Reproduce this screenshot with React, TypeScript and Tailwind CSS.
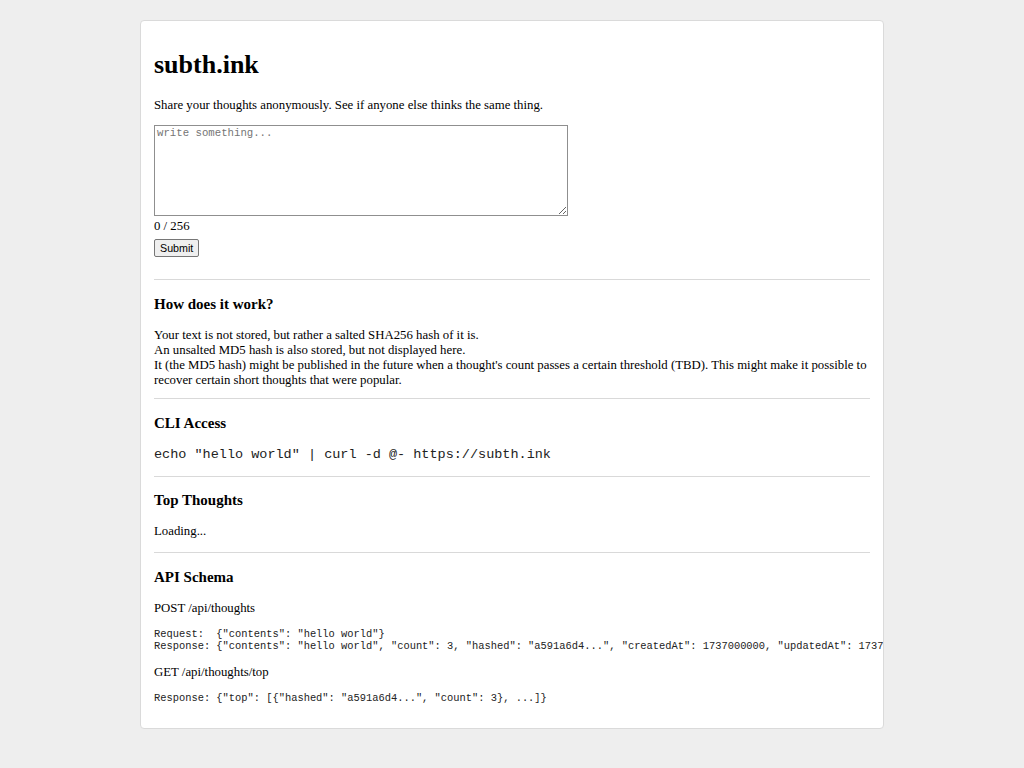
const serif = "font-['Liberation_Serif','Times_New_Roman',serif]";
const mono = "font-['Liberation_Mono','Courier_New',monospace]";

const Divider = () => <hr className="border-0 border-t border-[#d9d9d9]" />;

const Heading = ({ children, className = "" }: { children: React.ReactNode; className?: string }) => (
    <h3 className={`text-[15px] leading-[17px] font-bold ${className}`}>{children}</h3>
);

const App = () => {
    return (
        <div className={`min-h-[768px] bg-[#eeeeee] pt-[20px] pb-[40px] ${serif} text-black`}>
            <div className="mx-auto w-[744px] overflow-hidden rounded-[4px] border border-[#dadada] bg-white px-[13px] pt-[29px] pb-[24px]">
                <h1 className="text-[26px] leading-[30px] font-bold">subth.ink</h1>
                <p className="mt-[18px] text-[12.8px] leading-[15px]">
                    Share your thoughts anonymously. See if anyone else thinks the same thing.
                </p>
                <textarea
                    className={`mt-[12px] block h-[91px] w-[414px] resize-y border border-[#8f8f8f] px-[2px] py-[1px] ${mono} text-[10.7px] leading-[13px] placeholder:text-[#757575]`}
                    placeholder="write something..."
                />
                <div className="mt-[3px] text-[12.8px] leading-[15px]">0 / 256</div>
                <button className="mt-[5px] block h-[18px] rounded-[2px] border border-[#767676] bg-[#efefef] px-[5px] font-['Liberation_Sans',Arial,sans-serif] text-[10.7px] leading-[14px]">
                    Submit
                </button>

                <div className="mt-[22px]">
                    <Divider />
                </div>
                <Heading className="mt-[16px]">How does it work?</Heading>
                <p className="mt-[15px] text-[12.8px] leading-[15px]">
                    Your text is not stored, but rather a salted SHA256 hash of it is.
                    <br />
                    An unsalted MD5 hash is also stored, but not displayed here.
                    <br />
                    It (the MD5 hash) might be published in the future when a thought's count passes a certain threshold (TBD). This might make it possible to recover certain short thoughts that were popular.
                </p>

                <div className="mt-[10px]">
                    <Divider />
                </div>
                <Heading className="mt-[16px]">CLI Access</Heading>
                <div className={`mt-[15px] ${mono} text-[13.5px] leading-[15px] text-[#222]`}>
                    echo "hello world" | curl -d @- https://subth.ink
                </div>

                <div className="mt-[14px]">
                    <Divider />
                </div>
                <Heading className="mt-[15px]">Top Thoughts</Heading>
                <p className="mt-[15px] text-[12.8px] leading-[15px]">Loading...</p>

                <div className="mt-[13px]">
                    <Divider />
                </div>
                <Heading className="mt-[16px]">API Schema</Heading>
                <p className="mt-[15px] text-[12.8px] leading-[15px]">POST /api/thoughts</p>
                <pre className={`mt-[12px] ${mono} text-[10.4px] leading-[12px] whitespace-pre text-[#222]`}>
{`Request:  {"contents": "hello world"}
Response: {"contents": "hello world", "count": 3, "hashed": "a591a6d4...", "createdAt": 1737000000, "updatedAt": 1737000000}`}
                </pre>
                <p className="mt-[13px] text-[12.8px] leading-[15px]">GET /api/thoughts/top</p>
                <pre className={`mt-[12px] ${mono} text-[10.4px] leading-[12px] whitespace-pre text-[#222]`}>
{`Response: {"top": [{"hashed": "a591a6d4...", "count": 3}, ...]}`}
                </pre>
            </div>
        </div>
    );
};

export default App;
